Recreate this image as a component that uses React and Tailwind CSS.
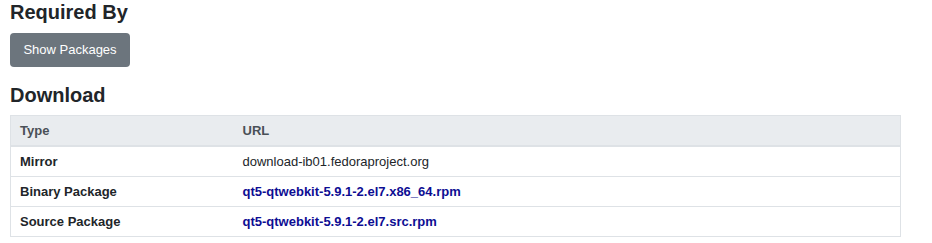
import React from 'react';

const rows = [
  { type: 'Mirror', url: 'download-ib01.fedoraproject.org', link: false },
  { type: 'Binary Package', url: 'qt5-qtwebkit-5.9.1-2.el7.x86_64.rpm', link: true },
  { type: 'Source Package', url: 'qt5-qtwebkit-5.9.1-2.el7.src.rpm', link: true },
];

export default function App() {
  return (
    <div className="bg-white min-h-[243px] px-[10px] pr-[31px] text-[#212529] font-['Liberation_Sans',Arial,sans-serif] text-[13px]">
      <h2 className="text-[20px] font-bold leading-[24px] pt-0">Required By</h2>
      <button className="mt-[9px] h-[34px] w-[120px] rounded-[4px] bg-[#6c757d] text-white text-[13px]">
        Show Packages
      </button>
      <h2 className="mt-[16px] text-[20px] font-bold leading-[24px]">Download</h2>
      <table className="mt-[8px] w-full border border-[#dee2e6] border-collapse">
        <thead>
          <tr className="bg-[#e9ecef] border-b-2 border-[#dee2e6]">
            <th className="w-[223px] text-left font-bold text-[#495057] px-[9px] py-[7px] leading-[15px]">Type</th>
            <th className="text-left font-bold text-[#495057] px-[9px] py-[7px] leading-[15px]">URL</th>
          </tr>
        </thead>
        <tbody>
          {rows.map((r) => (
            <tr key={r.type} className="border-t border-[#dee2e6]">
              <td className="font-bold px-[9px] py-[7px] leading-[15px]">{r.type}</td>
              <td className="px-[9px] py-[7px] leading-[15px]">
                {r.link ? (
                  <a href="#" className="font-bold text-[#0d0d93]">{r.url}</a>
                ) : (
                  r.url
                )}
              </td>
            </tr>
          ))}
        </tbody>
      </table>
    </div>
  );
}
